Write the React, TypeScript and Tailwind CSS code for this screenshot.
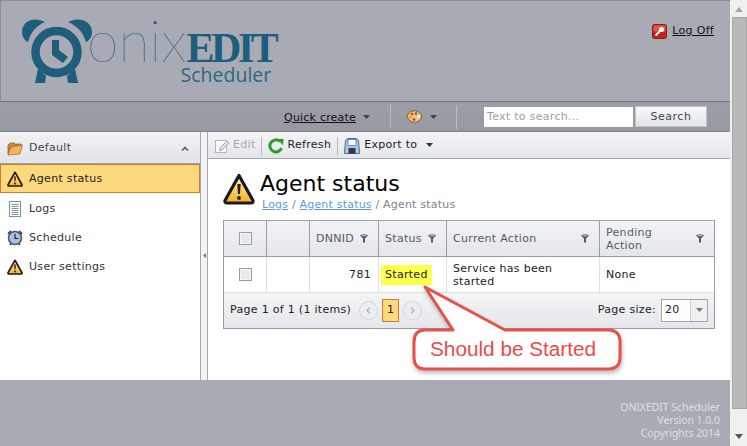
import React from "react";

const dv = "font-['DejaVu_Sans',sans-serif]";

function Warn({ size = 16 }: { size?: number }) {
  return (
    <svg width={size} height={size} viewBox="0 0 32 32" className="shrink-0">
      <defs>
        <linearGradient id="wg" x1="0" y1="0" x2="0" y2="1">
          <stop offset="0" stopColor="#fff4b8" />
          <stop offset="1" stopColor="#f5ae25" />
        </linearGradient>
      </defs>
      <path d="M16 2.500 L30 27.500 Q30.500 30 28 30 L4 30 Q1.500 30 2 27.500 Z" fill="url(#wg)" stroke="#1a1a1a" strokeWidth="3.200" strokeLinejoin="round" />
      <path d="M14.300 11 h3.400 l-.7 10 h-2 Z" fill="#222" />
      <circle cx="16" cy="25" r="1.900" fill="#222" />
    </svg>
  );
}

function Caret({ className = "" }: { className?: string }) {
  return (
    <svg width="7" height="4" viewBox="0 0 7 4" className={className}>
      <path d="M0 0h7L3.500 4Z" fill="currentColor" />
    </svg>
  );
}

function Filter() {
  return (
    <svg width="8" height="9" viewBox="0 0 8 9" className="shrink-0">
      <path d="M0 1.500 Q4 -1 8 1.500 L5 4.500 L5 8.500 L3 8.500 L3 4.500 Z" fill="#555a62" />
      <ellipse cx="4" cy="1.600" rx="2.500" ry=".8" fill="#b5b8bd" />
    </svg>
  );
}

function Check() {
  return (
    <span className="block w-[13px] h-[13px] border border-[#9a9da3] bg-[#e9e9e9] shadow-[inset_0_0_0_1px_#f7f7f7]" />
  );
}

function Logo() {
  return (
    <svg width="72" height="72" viewBox="0 0 72 72" className="shrink-0 overflow-visible">
      <g fill="#1f5d7c">
        <path d="M0 14 C0 3 12 -2 23 4 C14 8 9 14 6 24 C2 22 0 18 0 14 Z" />
        <path d="M46 4 C57 -2 70 3 70 14 C70 18 68 22 64 24 C61 14 55 8 46 4 Z" />
        <path d="M13 65 L16 51 L24 58 L23 65 Z" />
        <path d="M56 65 L53 51 L45 58 L46 65 Z" />
        <path d="M30 22 L30 37 L41 45 L46 39 L37 32 L37 22 Z" />
      </g>
      <circle cx="34.500" cy="34" r="21" fill="none" stroke="#1f5d7c" strokeWidth="8.500" />
    </svg>
  );
}

function NavItem({ icon, label, active }: { icon: React.ReactNode; label: string; active?: boolean }) {
  return (
    <div className={`flex items-center gap-[6px] h-[29px] text-[11px] tracking-[0.3px] ${active ? "bg-[#fdd97e] border border-[#cf7d2c] pl-[6px] pt-[1px] text-[#222]" : "pl-[7px] pt-[3px] text-[#333]"}`}>
      {icon}
      <span>{label}</span>
    </div>
  );
}

function HeaderCell({ children, filter = true, center = false }: { children?: React.ReactNode; filter?: boolean; center?: boolean }) {
  return (
    <div className={`flex items-center border-r border-[#9a9da6] last:border-r-0 text-[11px] leading-[13px] tracking-[0.3px] text-[#555b66] ${center ? "justify-center" : "justify-between pl-[6px] pr-[10px]"}`}>
      <span>{children}</span>
      {filter && <Filter />}
    </div>
  );
}

export default function App() {
  return (
    <div className={`relative flex w-[747px] h-[446px] overflow-hidden bg-white ${dv}`}>
      <div className="flex flex-col w-[730px] h-full shrink-0">
        {/* Header */}
        <header className="flex justify-between h-[102px] shrink-0 bg-[#a9abb4] border-t border-l border-[#8b8e98] border-b border-b-[#74767c]">
          <div className="flex items-start pl-[21px] pt-[17px]">
            <Logo />
            <div className="flex flex-col -ml-[7px] -mt-[2px]">
              <div className="flex items-baseline h-[48px]">
                <span className="font-['Lato',sans-serif] font-thin text-[57px] leading-[48px] text-[#1f5d7c]">onix</span>
                <span className="font-['Liberation_Serif',serif] font-bold text-[42px] leading-[48px] tracking-[-3.500px] text-[#1f5d7c]">EDIT</span>
              </div>
              <span className="self-end mr-[4px] font-['Open_Sans',sans-serif] text-[19.500px] leading-[22px] text-[#2a6785]">Scheduler</span>
            </div>
          </div>
          <div className="flex items-center gap-[5px] h-fit mt-[22px] mr-[16px] text-[11px] tracking-[0.3px] text-[#111]">
            <svg width="15" height="15" viewBox="0 0 15 15">
              <rect x=".5" y=".5" width="14" height="14" rx="2" fill="#c1241b" stroke="#8d1f16" />
              <rect x="1.500" y="1.500" width="12" height="6" rx="1" fill="#e2584c" />
              <circle cx="9.500" cy="5.500" r="2.500" fill="#fff" />
              <path d="M8 7 L3.500 11.500" stroke="#fff" strokeWidth="1.800" />
            </svg>
            <span className="underline">Log Off</span>
          </div>
        </header>
        {/* Toolbar */}
        <div className="flex items-center justify-end h-[30px] shrink-0 pr-[23px] bg-gradient-to-b from-[#9c9ea7] to-[#989aa3] border-b border-[#85878f] text-[11px]">
          <span className="underline tracking-[0.2px] text-[#111] mt-[3px]">Quick create</span>
          <Caret className="ml-[7px] text-[#444]" />
          <span className="w-px h-[24px] bg-[#bcbec5] ml-[20px]" />
          <svg width="15" height="13" viewBox="0 0 15 13" className="ml-[16px]">
            <ellipse cx="7.500" cy="6.500" rx="7" ry="5.800" fill="#f0c27a" stroke="#8a5a22" />
            <circle cx="5" cy="4" r="1.300" fill="#d8322a" />
            <circle cx="9" cy="3.500" r="1.300" fill="#3a62c8" />
            <circle cx="3.500" cy="7.500" r="1.300" fill="#e8a12a" />
            <circle cx="7" cy="9.500" r="1.300" fill="#c8322a" />
            <circle cx="11.500" cy="6.500" r="1.500" fill="#fff4dc" />
          </svg>
          <Caret className="ml-[8px] text-[#444]" />
          <span className="w-px h-[24px] bg-[#bcbec5] ml-[19px]" />
          <div className="flex items-center w-[149px] h-[20px] ml-[27px] pl-[3px] pt-[2px] bg-white text-[#a0a0a0] tracking-[0.3px]">Text to search...</div>
          <div className="flex items-center justify-center w-[72px] h-[21px] ml-[2px] pt-[2px] border border-[#bfc2c9] bg-gradient-to-b from-[#f7f8f9] to-[#e3e5ea] text-[#444] tracking-[0.5px]">Search</div>
        </div>
        {/* Main */}
        <div className="flex flex-1 min-h-0">
          <aside className="w-[200px] shrink-0 bg-white">
            <div className="flex items-center justify-between h-[32px] pl-[7px] pr-[11px] pt-[1px] bg-gradient-to-b from-[#f1f2f4] to-[#e2e4e9] border-b border-[#9ea1a9] text-[11px] tracking-[0.3px] text-[#444]">
              <div className="flex items-center gap-[6px]">
                <svg width="16" height="15" viewBox="0 0 16 15">
                  <path d="M1 13 L1 4 L3 2 L7 2 L8 3 L14 3 L14 5 L4 5 Z" fill="#c98a35" stroke="#93591c" strokeWidth=".7" />
                  <path d="M1 14 L4 6 L15.500 4 L13 13 Z" fill="#f1b35c" stroke="#a8682a" strokeWidth=".7" />
                </svg>
                <span>Default</span>
              </div>
              <svg width="8" height="5" viewBox="0 0 8 5">
                <path d="M1 4.500 L4 1.500 L7 4.500" fill="none" stroke="#555" strokeWidth="1.500" />
              </svg>
            </div>
            <NavItem active icon={<Warn />} label="Agent status" />
            <NavItem
              label="Logs"
              icon={
                <svg width="16" height="16" viewBox="0 0 16 16" className="shrink-0">
                  <rect x="2.500" y=".5" width="11" height="15" fill="#fff" stroke="#6c94c8" />
                  <path d="M4.500 3.500h7M4.500 5.500h7M4.500 7.500h7M4.500 9.500h7M4.500 11.500h7M4.500 13.500h7" stroke="#8a8f98" />
                </svg>
              }
            />
            <NavItem
              label="Schedule"
              icon={
                <svg width="16" height="16" viewBox="0 0 16 16" className="shrink-0">
                  <path d="M1 4 L4 1 M15 4 L12 1 M3 15 L4.500 13 M13 15 L11.500 13" stroke="#444" strokeWidth="1.800" />
                  <circle cx="8" cy="8" r="6.500" fill="#9fc6ea" stroke="#555" strokeWidth="1.500" />
                  <path d="M8 4 V8.500 H11.500" fill="none" stroke="#223" strokeWidth="1.200" />
                </svg>
              }
            />
            <NavItem icon={<Warn />} label="User settings" />
          </aside>
          {/* Splitter */}
          <div className="flex items-center justify-center w-[8px] shrink-0 bg-[#f3f3f3] border-x border-[#a5a7ae]">
            <svg width="3" height="5" viewBox="0 0 3 5" className="mt-[-2px]">
              <path d="M3 0V5L0 2.500Z" fill="#777" />
            </svg>
          </div>
          <main className="flex-1 min-w-0 bg-white">
            <div className="flex items-center h-[27px] pl-[6px] pt-[1px] bg-gradient-to-b from-[#f3f4f5] to-[#e4e6ea] border-b border-[#a5a7ae] text-[11px] tracking-[0.3px] text-[#222]">
              <svg width="16" height="16" viewBox="0 0 16 16">
                <rect x="1.500" y="2.500" width="11" height="12" fill="#fafafa" stroke="#b5b5b5" />
                <path d="M6 10 L13 3 L15 5 L8 12 L5.500 12.500 Z" fill="#e6e6e6" stroke="#a5a5a5" />
              </svg>
              <span className="ml-[3px] text-[#a4a6aa]">Edit</span>
              <span className="w-px h-[18px] ml-[5px] bg-[#b9bbc0]" />
              <svg width="16" height="16" viewBox="0 0 16 16" className="ml-[6px]">
                <path d="M13.500 10 A6 6 0 1 1 12 3.500" fill="none" stroke="#2f9a2c" strokeWidth="3" />
                <path d="M9.500 1 L15.500 1 L15 7.500 Z" fill="#2f9a2c" />
              </svg>
              <span className="ml-[4px]">Refresh</span>
              <span className="w-px h-[18px] ml-[6px] bg-[#b9bbc0]" />
              <svg width="16" height="16" viewBox="0 0 16 16" className="ml-[6px]">
                <path d="M1.500 2.500 L4 .5 L12 .5 L14.500 2.500 L15.500 15.500 L.5 15.500 Z" fill="#a9c8ec" stroke="#3f6fa8" />
                <rect x="4" y="1.500" width="8" height="6" fill="#fff" stroke="#3f6fa8" strokeWidth=".7" />
                <rect x="4.500" y="10" width="7" height="5.500" fill="#334" />
              </svg>
              <span className="ml-[4px]">Export to</span>
              <Caret className="ml-[9px] -mt-[1px] text-[#333]" />
            </div>
            <div className="pl-[15px] pr-[15px]">
              <div className="flex gap-[5px] pt-[12px]">
                <div className="pt-[2px]"><Warn size={32} /></div>
                <div className="flex flex-col">
                  <h1 className="text-[22px] leading-[26px] text-black">Agent status</h1>
                  <div className="text-[11px] leading-[13px] ml-[2px] mt-[1px] tracking-[0.2px] text-[#7f8287]">
                    <span className="underline text-[#5a9be8]">Logs</span> / <span className="underline text-[#5a9be8]">Agent status</span> / Agent status
                  </div>
                </div>
              </div>
              {/* Grid */}
              <div className="mt-[9px] w-[492px] border border-[#9a9da6] text-[11px] tracking-[0.3px]">
                <div className="grid grid-cols-[43px_43px_69px_68px_153px_1fr] h-[36px] bg-gradient-to-b from-[#f2f3f5] to-[#e3e6ea] border-b border-[#9a9da6]">
                  <HeaderCell filter={false} center><Check /></HeaderCell>
                  <HeaderCell filter={false} />
                  <HeaderCell>DNNID</HeaderCell>
                  <HeaderCell>Status</HeaderCell>
                  <HeaderCell>Current Action</HeaderCell>
                  <HeaderCell>Pending<br />Action</HeaderCell>
                </div>
                <div className="grid grid-cols-[43px_43px_69px_68px_153px_1fr] h-[35px] text-[#222] leading-[13px]">
                  <div className="flex items-center justify-center border-r border-[#dedfe2]"><Check /></div>
                  <div className="border-r border-[#dedfe2]" />
                  <div className="flex items-center justify-end pr-[7px] border-r border-[#dedfe2]">781</div>
                  <div className="flex items-center pl-[2px] border-r border-[#dedfe2]">
                    <span className="flex items-center h-[20px] px-[4px] bg-[#ffff4d]">Started</span>
                  </div>
                  <div className="flex items-center pl-[6px] border-r border-[#dedfe2]">Service has been<br />started</div>
                  <div className="flex items-center pl-[6px]">None</div>
                </div>
                <div className="flex items-center justify-between h-[36px] pl-[6px] pr-[6px] pb-[1px] bg-gradient-to-b from-[#f4f5f6] to-[#e4e6ea] border-t border-[#dedfe2] text-[#222]">
                  <div className="flex items-center">
                    <span>Page 1 of 1 (1 items)</span>
                    <span className="flex items-center justify-center w-[19px] h-[19px] ml-[8px] rounded-full border border-[#d4d6da] bg-[#eceef0]">
                      <svg width="5" height="7" viewBox="0 0 5 7"><path d="M4 .5 L1 3.500 L4 6.500" fill="none" stroke="#b5b7bb" strokeWidth="1.500" /></svg>
                    </span>
                    <span className="flex items-center justify-center w-[17px] h-[23px] ml-[4px] bg-[#fdd97e] border border-[#cf7d2c]">1</span>
                    <span className="flex items-center justify-center w-[19px] h-[19px] ml-[4px] rounded-full border border-[#d4d6da] bg-[#eceef0]">
                      <svg width="5" height="7" viewBox="0 0 5 7"><path d="M1 .5 L4 3.500 L1 6.500" fill="none" stroke="#b5b7bb" strokeWidth="1.500" /></svg>
                    </span>
                  </div>
                  <div className="flex items-center">
                    <span>Page size:</span>
                    <div className="flex items-center w-[47px] h-[23px] ml-[5px] border border-[#a5a7ae] bg-white">
                      <span className="flex-1 pl-[3px]">20</span>
                      <span className="flex items-center justify-center w-[17px] h-full border-l border-[#c9cbd0] bg-[#eef0f2]">
                        <Caret className="text-[#777]" />
                      </span>
                    </div>
                  </div>
                </div>
              </div>
            </div>
          </main>
        </div>
        {/* Footer */}
        <footer className="flex flex-col items-end justify-end h-[66px] shrink-0 pr-[10px] pb-[6px] bg-[#a9abb4] font-['Noto_Sans',sans-serif] text-[10.500px] leading-[13px] tracking-[-0.050px] text-[#d6e0e8]">
          <span>ONIXEDIT Scheduler</span>
          <span>Version 1.0.0</span>
          <span>Copyrights 2014</span>
        </footer>
      </div>
      {/* Page scrollbar */}
      <div className="flex flex-col items-center w-[17px] shrink-0 bg-[#f0f0f0]">
        <svg width="8" height="5" viewBox="0 0 8 5" className="mt-[7px]"><path d="M0 5L4 0L8 5Z" fill="#a6a6a6" /></svg>
        <div className="w-[15px] h-[392px] mt-[5px] ml-[1px] bg-[#b9b9b9] border border-[#a8a8a8]" />
        <svg width="8" height="5" viewBox="0 0 8 5" className="mt-[25px]"><path d="M0 0L8 0L4 5Z" fill="#555" /></svg>
      </div>
      {/* Annotation callout */}
      <div className="absolute left-[405px] top-[280px] w-[225px] h-[100px]">
        <svg width="225" height="100" viewBox="0 0 225 100" className="absolute inset-0 drop-shadow-[1px_3px_2px_rgba(0,0,0,0.25)]">
          <path
            d="M20 7 L48 50 L20 50 Q9 50 9 62 L9 77 Q9 89 20 89 L203 89 Q215 89 215 77 L215 62 Q215 50 203 50 L100 50 Z"
            fill="#fff"
            stroke="#e8504a"
            strokeWidth="3"
            strokeLinejoin="round"
          />
        </svg>
        <span className="absolute left-[25px] top-[57px] font-['Liberation_Sans',sans-serif] text-[20.750px] leading-[24px] whitespace-nowrap text-[#e84c47]">Should be Started</span>
      </div>
    </div>
  );
}
